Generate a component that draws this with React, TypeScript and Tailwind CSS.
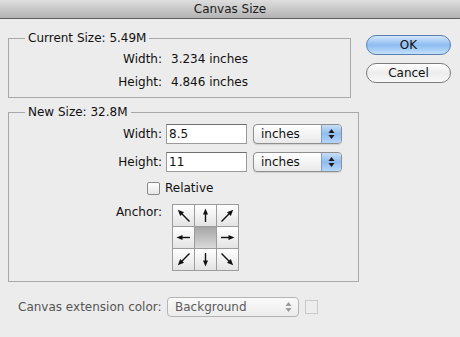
const font = { fontFamily: '"DejaVu Sans", "Liberation Sans", sans-serif' };

function Stepper({ disabled = false }: { disabled?: boolean }) {
  const c = disabled ? "#9a9a9a" : "#1a1a1a";
  return (
    <svg width="7" height="12" viewBox="0 0 7 12">
      <polygon points="3.5,1 6.5,5 0.5,5" fill={c} />
      <polygon points="3.5,11 6.5,7 0.5,7" fill={c} />
    </svg>
  );
}

function Popup({ label }: { label: string }) {
  return (
    <div className="ml-[6px] flex h-[20px] w-[89px] overflow-hidden rounded-[4px] border border-[#8f8f8f] bg-linear-to-b from-white to-[#e9e9e9] shadow-[0_1px_1px_rgba(0,0,0,0.12)]">
      <span className="flex-1 pl-[7px] text-[12px] leading-[18px] text-[#111]">{label}</span>
      <span className="flex w-[20px] items-center justify-center border-l border-[#7f9fc9] bg-linear-to-b from-[#c9def6] via-[#8fbcef] to-[#b5d6fa]">
        <Stepper />
      </span>
    </div>
  );
}

function Field({ value }: { value: string }) {
  return (
    <div className="ml-[4px] h-[20px] w-[81px] border border-[#9b9b9b] border-t-[#6f6f6f] bg-white pl-[2px] text-[12px] leading-[18px] text-[#111]">
      {value}
    </div>
  );
}

function Arrow({ deg }: { deg: number }) {
  const diag = deg % 90 !== 0;
  return (
    <svg width="21" height="21" viewBox="0 0 21 21">
      <g transform={`rotate(${deg} 10.5 10.5)`}>
        <line x1="10.5" y1={diag ? 19 : 17} x2="10.5" y2={diag ? 6 : 7} stroke="#111" strokeWidth="1.4" />
        <polygon points={diag ? "10.5,2.5 7.8,8.5 13.2,8.5" : "10.5,3.5 8,9.5 13,9.5"} fill="#111" />
      </g>
    </svg>
  );
}

function AnchorGrid() {
  const dirs = [315, 0, 45, 270, -1, 90, 225, 180, 135];
  return (
    <div className="ml-[10px] grid w-[67px] grid-cols-3 gap-px border border-[#9c9c9c] bg-[#9c9c9c]">
      {dirs.map((d, i) =>
        d < 0 ? (
          <div key={i} className="h-[21px] w-[21px] bg-linear-to-b from-[#a6a6a6] to-[#d9d9d9]" />
        ) : (
          <div key={i} className="flex h-[21px] w-[21px] items-center justify-center bg-linear-to-b from-white to-[#e4e4e4]">
            <Arrow deg={d} />
          </div>
        )
      )}
    </div>
  );
}

export default function App() {
  return (
    <div className="h-[337px] w-[460px] overflow-hidden bg-[#ececec] text-[12px] text-[#111]" style={font}>
      <div className="flex h-[19px] items-center justify-center border-b border-[#5e5e5e] bg-linear-to-b from-[#dedede] to-[#b3b3b3] text-[12px] leading-[18px] text-[#1c1c1c]">
        Canvas Size
      </div>

      <div className="flex">
        <div className="w-[350px] pl-[8px]">
          <fieldset className="mt-[11px] w-[343px] border border-[#a8a8a8] px-[16px] pt-[4px] pb-[6px]">
            <legend className="px-[3px] leading-[16px]">Current Size: 5.49M</legend>
            <div className="flex h-[18px] items-center">
              <span className="w-[137px] text-right">Width:</span>
              <span className="ml-[9px]">3.234 inches</span>
            </div>
            <div className="mt-[5px] flex h-[18px] items-center">
              <span className="w-[137px] text-right">Height:</span>
              <span className="ml-[9px]">4.846 inches</span>
            </div>
          </fieldset>

          <fieldset className="mt-[6px] w-[343px] border border-[#a8a8a8] px-[16px] pt-[4px] pb-[10px]">
            <legend className="px-[3px] leading-[16px]">New Size: 32.8M</legend>
            <div className="flex h-[20px] items-center">
              <span className="w-[137px] text-right">Width:</span>
              <Field value="8.5" />
              <Popup label="inches" />
            </div>
            <div className="mt-[8px] flex h-[20px] items-center">
              <span className="w-[137px] text-right">Height:</span>
              <Field value="11" />
              <Popup label="inches" />
            </div>
            <div className="mt-[8px] flex h-[16px] items-center">
              <span className="ml-[122px] h-[13px] w-[13px] rounded-[2px] border border-[#8a8a8a] bg-linear-to-b from-white to-[#e6e6e6]" />
              <span className="ml-[5px]">Relative</span>
            </div>
            <div className="mt-[8px] flex items-start">
              <span className="w-[137px] text-right leading-[16px]">Anchor:</span>
              <AnchorGrid />
            </div>
          </fieldset>

          <div className="mt-[15px] flex h-[20px] items-center pl-[10px]">
            <span className="w-[149px] whitespace-nowrap text-[#555]">Canvas extension color:</span>
            <div className="flex h-[20px] w-[132px] items-center rounded-[4px] border border-[#b4b4b4] bg-linear-to-b from-[#fafafa] to-[#ececec]">
              <span className="flex-1 pl-[7px] text-[#5c5c5c]">Background</span>
              <span className="mr-[5px] flex w-[10px] justify-center">
                <Stepper disabled />
              </span>
            </div>
            <div className="ml-[6px] h-[14px] w-[13px] border border-[#c9c9c9] bg-[#ededed]" />
          </div>
        </div>

        <div className="flex flex-col gap-[8px] pl-[16px] pt-[16px]">
          <div className="flex h-[20px] w-[85px] items-center justify-center rounded-full border border-[#5b7fae] bg-linear-to-b from-[#d3e6fb] via-[#8cbcf0] to-[#c3e0fc] text-[#111]">
            OK
          </div>
          <div className="flex h-[20px] w-[85px] items-center justify-center rounded-full border border-[#7c7c7c] bg-linear-to-b from-white via-[#ececec] to-[#f9f9f9] text-[#111]">
            Cancel
          </div>
        </div>
      </div>
    </div>
  );
}
